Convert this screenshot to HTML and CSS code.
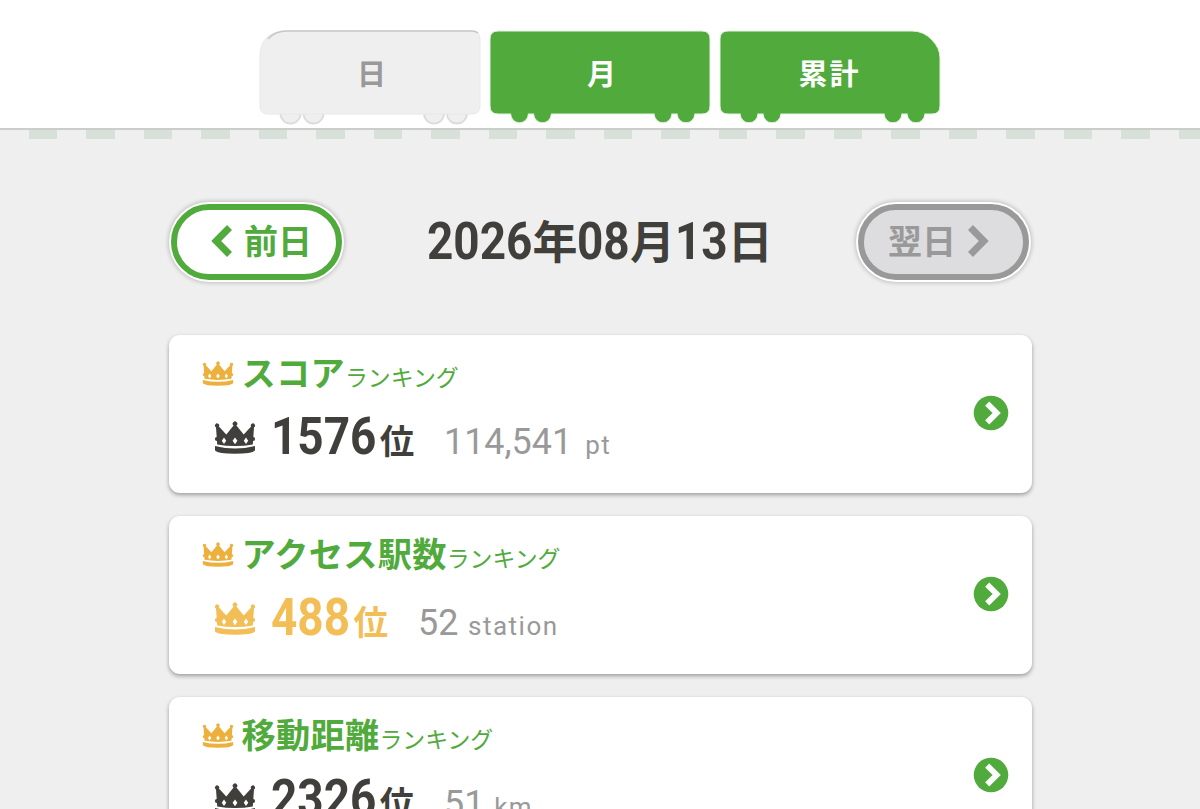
FILE: index.html
```html
<!DOCTYPE html>
<html lang="ja">
<head>
<meta charset="utf-8">
<title>ランキング</title>
<link rel="stylesheet" href="styles.css">
</head>
<body>
<svg class="defs" aria-hidden="true">
  <symbol id="crown" viewBox="0 0 42 33">
    <path d="M3.2 23.5 2 6.3A2.1 2.1 0 1 1 4.9 5.6L12.3 13.6 19.6 4.6A2.3 2.3 0 1 1 22.4 4.6L29.7 13.6 37.1 5.6A2.1 2.1 0 1 1 40 6.3L38.8 23.5Q21 26.5 3.2 23.5Z"/>
    <path d="M1 25Q21 30 41 25V29.5Q38 32.8 21 32.8T1 29.5Z"/>
    <circle cx="2.8" cy="18" r="1.9"/><circle cx="39.2" cy="18" r="1.9"/>
    <g fill="#fff"><path d="m10 16.6 2.2 3.2-2.2 3.2-2.2-3.2ZM21 16.4l2.4 3.4-2.4 3.4-2.4-3.4ZM32 16.6l2.2 3.2-2.2 3.2-2.2-3.2Z"/></g>
  </symbol>
  <symbol id="go" viewBox="0 0 36 36">
    <circle cx="18" cy="18" r="17.3" fill="#51aa3c"/>
    <path d="M14.2 8.6 23.7 18 14.2 27.4" fill="none" stroke="#fff" stroke-width="5.8"/>
  </symbol>
</svg>
<header class="header">
  <nav class="train">
    <a class="car car-off">
      <svg class="car-body" viewBox="0 0 222 98">
        <g fill="#efefef" stroke="#dcdcdc" stroke-width="1.8"><circle cx="31.5" cy="84.5" r="10"/><circle cx="54.5" cy="84.5" r="10"/><circle cx="175" cy="84.5" r="10"/><circle cx="198" cy="84.5" r="10"/></g>
        <path d="M1 28Q1 2 28 2H213Q221 2 221 10V77Q221 85 213 85H9Q1 85 1 77Z" fill="#efefef" stroke="#e8e8e8"/>
        <path d="M9 10Q16 2 28 2H213Q217 2 219 4" fill="none" stroke="#c8c8c8" stroke-width="1.6"/>
      </svg>
      <span class="car-label">日</span>
    </a>
    <a class="car">
      <svg class="car-body" viewBox="0 0 222 98">
        <g fill="#51aa3c" stroke="#e7f1e5" stroke-width="1"><circle cx="30.5" cy="85" r="8.8"/><circle cx="53.5" cy="85" r="8.8"/><circle cx="174" cy="85" r="8.8"/><circle cx="197" cy="85" r="8.8"/>
        <path d="M1 10Q1 2 9 2H213Q221 2 221 10V77Q221 85 213 85H9Q1 85 1 77Z"/></g>
        <path d="M22.2 82h16.6v4H22.2ZM45.2 82h16.6v4H45.2ZM165.7 82h16.6v4h-16.6ZM188.7 82h16.6v4h-16.6Z" fill="#51aa3c"/>
      </svg>
      <span class="car-label">月</span>
    </a>
    <a class="car">
      <svg class="car-body" viewBox="0 0 222 98">
        <g fill="#51aa3c" stroke="#e7f1e5" stroke-width="1"><circle cx="30" cy="85" r="8.8"/><circle cx="53" cy="85" r="8.8"/><circle cx="174" cy="85" r="8.8"/><circle cx="197" cy="85" r="8.8"/>
        <path d="M1 10Q1 2 9 2H193Q205 2 213 11 221 19 221 29V77Q221 85 213 85H9Q1 85 1 77Z"/></g>
        <path d="M21.7 82h16.6v4H21.7ZM44.7 82h16.6v4H44.7ZM165.7 82h16.6v4h-16.6ZM188.7 82h16.6v4h-16.6Z" fill="#51aa3c"/>
      </svg>
      <span class="car-label wide">累計</span>
    </a>
  </nav>
</header>
<div class="rail"></div>
<main class="main">
  <div class="pager">
    <a class="pill"><svg width="22" height="32" viewBox="0 0 22 32"><path d="M18.5 2.5 5.2 16 18.5 29.5" fill="none" stroke="#51aa3c" stroke-width="7"/></svg><span>前日</span></a>
    <h1 class="date"><span class="num w4">2026</span>年<span class="num w2">08</span>月<span class="num w2">13</span>日</h1>
    <a class="pill pill-off"><span>翌日</span><svg width="22" height="32" viewBox="0 0 22 32"><path d="M3.5 2.5 16.8 16 3.5 29.5" fill="none" stroke="#999" stroke-width="7"/></svg></a>
  </div>
  <section class="card">
    <div class="info">
      <h2 class="title"><svg class="mini"><use href="#crown"/></svg><b>スコア</b><span>ランキング</span></h2>
      <p class="result"><svg class="crown"><use href="#crown"/></svg><span class="num w4">1576</span><span class="unit">位</span><span class="value"><span>114,541</span></span><span class="measure">pt</span></p>
    </div>
    <svg class="go"><use href="#go"/></svg>
  </section>
  <section class="card">
    <div class="info">
      <h2 class="title"><svg class="mini"><use href="#crown"/></svg><b>アクセス駅数</b><span>ランキング</span></h2>
      <p class="result gold"><svg class="crown"><use href="#crown"/></svg><span class="num w3">488</span><span class="unit">位</span><span class="value v2"><span>52</span></span><span class="measure">station</span></p>
    </div>
    <svg class="go"><use href="#go"/></svg>
  </section>
  <section class="card">
    <div class="info">
      <h2 class="title"><svg class="mini"><use href="#crown"/></svg><b>移動距離</b><span>ランキング</span></h2>
      <p class="result"><svg class="crown"><use href="#crown"/></svg><span class="num w4">2326</span><span class="unit">位</span><span class="value v2"><span>51</span></span><span class="measure">km</span></p>
    </div>
    <svg class="go"><use href="#go"/></svg>
  </section>
</main>
</body>
</html>
```
FILE: styles.css
```css
* { box-sizing: border-box; }
body {
  margin: 0;
  height: 809px;
  overflow: hidden;
  background: #efefef;
  color: #403f3b;
  font-family: Roboto, "Noto Sans CJK JP", sans-serif;
}
h1, h2, p { margin: 0; }
.defs { position: absolute; width: 0; height: 0; }
.header { height: 128px; background: #fff; }
.train { display: flex; justify-content: center; gap: 8px; padding: 29px 0 0; }
.car {
  position: relative;
  width: 222px;
  height: 98px;
  padding: 21px 0 0 4px;
  text-align: center;
  color: #fff;
  font: 700 29px/44px "Noto Sans CJK JP", sans-serif;
}
.car-off { margin-left: -1px; color: #999; }
.car-body { position: absolute; left: 0; top: 0; width: 222px; height: 98px; }
.car-label { position: relative; }
.car-label.wide { letter-spacing: 2px; margin-right: 4px; }
.rail {
  height: 11px;
  border-top: 2px solid #cacdca;
  background: repeating-linear-gradient(90deg, transparent 0 29px, #d7e0d9 29px 57.48px);
}
.main { width: 863px; margin: 65px auto 0; }
.pager { display: flex; justify-content: space-between; align-items: center; height: 76px; padding: 0 2px; margin-bottom: 55px; }
.pill {
  display: flex;
  align-items: center;
  justify-content: center;
  gap: 11px;
  width: 171px;
  height: 76px;
  border: 6px solid #51aa3c;
  border-radius: 38px;
  background: #fff;
  box-shadow: 0 0 0 2px #fff, 0 0 4px 3px rgba(0, 0, 0, .2);
  color: #51aa3c;
  font: 700 34px/60px "Noto Sans CJK JP", sans-serif;
}
.pill span { margin-top: -4px; }
.pill svg { margin-top: -3px; }
.pill:first-child { padding-left: 11px; }
.pill-off { padding-right: 11px; border-color: #999; background: #dddddf; color: #999; }
.date { display: flex; align-items: baseline; margin-top: -3px; font: 700 45px/60px "Noto Sans CJK JP", sans-serif; }
.num {
  display: inline-block;
  font: 700 51px/60px Roboto, sans-serif;
  transform: scaleX(.9);
  transform-origin: left;
  white-space: nowrap;
}
.w2 { width: 52.6px; }
.w3 { width: 79px; }
.w4 { width: 105.2px; }
.card {
  display: flex;
  align-items: center;
  justify-content: space-between;
  height: 158px;
  margin-bottom: 23.2px;
  padding: 0 23px 2px 33px;
  border-radius: 11px;
  background: #fff;
  box-shadow: 0 2px 4px rgba(0, 0, 0, .35);
}
.info { margin-bottom: 12px; }
.go { width: 36px; height: 36px; }
.title { display: flex; align-items: baseline; height: 61px; color: #51aa3c; font: 400 22.9px/50px "Noto Sans CJK JP", sans-serif; }
.title b { font-size: 34.2px; letter-spacing: .3px; margin-left: 8px; }
.mini { width: 32px; height: 25px; fill: #eeb03c; }
.result { display: flex; align-items: baseline; height: 62px; padding-left: 12px; }
.crown { width: 42px; height: 33px; margin-right: 15px; fill: currentColor; }
.gold { color: #f2be55; }
.unit { margin-left: 4px; font: 700 34.5px/60px "Noto Sans CJK JP", sans-serif; }
.value { width: 129px; margin-left: 30px; color: #999; font-size: 37px; }
.value span { display: inline-block; transform: scaleX(.97); transform-origin: left; }
.v2 { width: 38px; }
.measure { margin-left: 12px; color: #999; font-size: 26px; letter-spacing: 1.5px; }
```
